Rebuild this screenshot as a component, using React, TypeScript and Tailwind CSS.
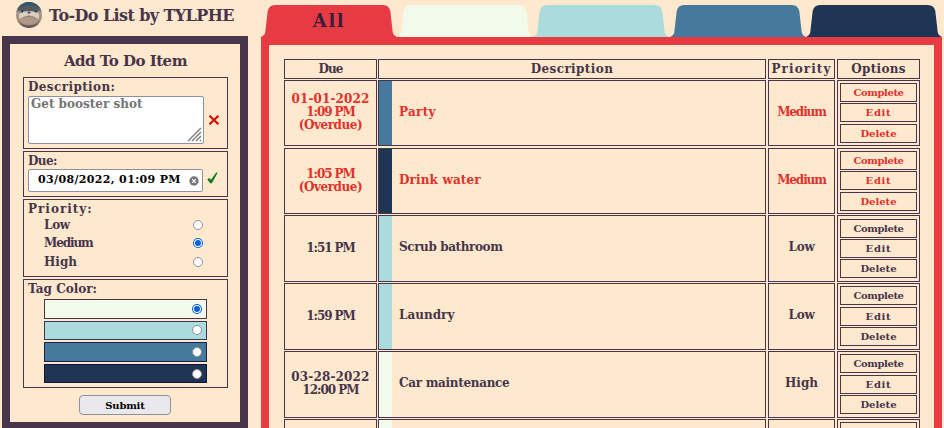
import type { ReactNode } from 'react';

const tabs = ['fill-[#e73b44]', 'fill-[#f2faeb]', 'fill-[#abdbdc]', 'fill-[#467a9c]', 'fill-[#1e3553]'];

type Line = { text: string; tracking: string };
type Item = {
  due: Line[];
  title: Line;
  priority: Line;
  tag: string;
  overdue?: boolean;
  size: string;
  gaps: [string, string, string];
};

const medium = { text: 'Medium', tracking: 'tracking-[-1.1px]' };
const low = { text: 'Low', tracking: 'tracking-[-0.3px]' };
const high = { text: 'High', tracking: 'tracking-[0px]' };

const items: Item[] = [
  {
    due: [
      { text: '01-01-2022', tracking: 'tracking-[0.1px]' },
      { text: '1:09 PM', tracking: 'tracking-[-1.1px]' },
      { text: '(Overdue)', tracking: 'tracking-[-0.45px]' },
    ],
    title: { text: 'Party', tracking: 'tracking-[0.3px]' },
    priority: medium,
    tag: 'bg-[#467a9c]',
    overdue: true,
    size: 'h-[66px] mb-[2px]',
    gaps: ['mt-0', 'mt-[1px]', 'mt-[2px]'],
  },
  {
    due: [
      { text: '1:05 PM', tracking: 'tracking-[-1.1px]' },
      { text: '(Overdue)', tracking: 'tracking-[-0.45px]' },
    ],
    title: { text: 'Drink water', tracking: 'tracking-[0.15px]' },
    priority: medium,
    tag: 'bg-[#1e3553]',
    overdue: true,
    size: 'h-[66px] mb-[1px]',
    gaps: ['mt-0', 'mt-[1px]', 'mt-[2px]'],
  },
  {
    due: [{ text: '1:51 PM', tracking: 'tracking-[-1.1px]' }],
    title: { text: 'Scrub bathroom', tracking: 'tracking-[-0.4px]' },
    priority: low,
    tag: 'bg-[#abdbdc]',
    size: 'h-[67px] mb-[1px]',
    gaps: ['mt-[1px]', 'mt-[1px]', 'mt-[1px]'],
  },
  {
    due: [{ text: '1:59 PM', tracking: 'tracking-[-1.1px]' }],
    title: { text: 'Laundry', tracking: 'tracking-[0px]' },
    priority: low,
    tag: 'bg-[#abdbdc]',
    size: 'h-[67px] mb-[1px]',
    gaps: ['mt-0', 'mt-[2px]', 'mt-[1px]'],
  },
  {
    due: [
      { text: '03-28-2022', tracking: 'tracking-[0.15px]' },
      { text: '12:00 PM', tracking: 'tracking-[-1px]' },
    ],
    title: { text: 'Car maintenance', tracking: 'tracking-[-0.3px]' },
    priority: high,
    tag: 'bg-[#f2faeb]',
    size: 'h-[67px] mb-[1px]',
    gaps: ['mt-0', 'mt-[2px]', 'mt-[1px]'],
  },
  {
    due: [],
    title: { text: '', tracking: '' },
    priority: { text: '', tracking: '' },
    tag: 'bg-[#f2faeb]',
    size: 'h-[67px]',
    gaps: ['mt-0', 'mt-[2px]', 'mt-[1px]'],
  },
];

const columns = 'grid grid-cols-[93px_388px_67px_83px]';

function Radio({ checked = false }: { checked?: boolean }) {
  return checked ? (
    <span className="flex size-[10px] shrink-0 items-center justify-center rounded-full bg-white ring-1 ring-[#0060df] ring-inset">
      <span className="size-[6px] rounded-full bg-[#0060df]" />
    </span>
  ) : (
    <span className="size-[10px] shrink-0 rounded-full border border-[#8f8f9d] bg-white" />
  );
}

function Group({ className, children }: { className: string; children: ReactNode }) {
  return <section className={`w-[205px] border border-[#47354b] pl-[4px] ${className}`}>{children}</section>;
}

function Avatar() {
  return (
    <svg className="size-[26px]" viewBox="0 0 26 26">
      <defs>
        <clipPath id="face">
          <circle cx="13" cy="13" r="13" />
        </clipPath>
        <linearGradient id="fur" x1="0" y1="0" x2="0" y2="1">
          <stop offset="0" stopColor="#3b4a59" />
          <stop offset=".3" stopColor="#62666c" />
          <stop offset=".42" stopColor="#a89c90" />
          <stop offset=".7" stopColor="#a28a7b" />
          <stop offset="1" stopColor="#574a55" />
        </linearGradient>
      </defs>
      <g clipPath="url(#face)">
        <rect width="26" height="26" fill="url(#fur)" />
        <path d="M0 0h26v8C20 2 6 2 0 9z" fill="#31586c" />
        <path d="M3 8C7 2 18 2 23 8l-4 2H8z" fill="#565b62" />
        <path d="M3 12q4-3 10-3t10 3v5q-5-1-7-2l-3-1-3 1q-2 1-7 2z" fill="#d8cdc1" />
        <path d="M3 17q5-1 7-2l3-1 3 1q2 1 7 2-2 6-10 6T3 17z" fill="#b09786" />
        <ellipse cx="13" cy="10.6" rx="1.7" ry="1" fill="#4c464b" />
        <circle cx="6.2" cy="9.4" r="1" fill="#272933" />
        <circle cx="19.8" cy="9.4" r="1" fill="#272933" />
        <path d="M6.5 16q2-1.4 4-1.2l2.5-1 2.5 1q2-.2 4 1.2" fill="none" stroke="#74665f" strokeWidth=".8" />
      </g>
    </svg>
  );
}

function Sidebar() {
  return (
    <aside className="ml-[2px] w-[246px] shrink-0">
      <header className="flex h-9 pt-[2px] pl-[14px]">
        <Avatar />
        <h1 className="ml-[7px] pt-[2px] text-[16px] leading-[24px] tracking-[-0.6px] whitespace-nowrap">To-Do List by TYLPHE</h1>
      </header>
      <form className="flex h-[394px] flex-col border-8 border-[#47354b] pl-[13px]">
        <h2 className="h-[33px] w-[205px] pt-[7px] text-center text-[15px] leading-5 tracking-[-0.5px]">Add To Do Item</h2>
        <Group className="h-[72px]">
          <div className="h-[18px] pt-[1px] leading-4 tracking-[0.4px]">Description:</div>
          <div className="flex items-center">
            <div className="flex h-[48px] w-[176px] justify-between rounded-[2px] border border-[#8f8f9d] bg-white pl-[2px]">
              <span className="leading-[14px] whitespace-nowrap text-[#757575]">Get booster shot</span>
              <svg className="mr-[1px] mb-[1px] size-[15px] shrink-0 self-end" viewBox="0 0 15 15" fill="none" stroke="#777" strokeWidth="1.3">
                <path d="M1 14 14 1M5 14l9-9M9 14l5-5M13 14l1-1" />
              </svg>
            </div>
            <svg className="ml-[4px] h-[10px] w-[12px]" viewBox="0 0 12 10" stroke="#dc0808" strokeWidth="2.2">
              <path d="m1.5.8 9 8.4M10.5.8l-9 8.4" />
            </svg>
          </div>
        </Group>
        <Group className="mt-[2px] h-[46px]">
          <div className="h-[17px] pt-[1px] leading-4 tracking-[-0.6px]">Due:</div>
          <div className="flex">
            <div className="flex h-[23px] w-[175px] items-center rounded-[2px] border border-[#8f8f9d] bg-white pl-[9px] text-[11px] text-black">
              <span className="w-[151px] pb-[2px] tracking-[0.35px] whitespace-nowrap">03/08/2022, 01:09 PM</span>
              <svg className="size-[10px] shrink-0" viewBox="0 0 10 10">
                <circle cx="5" cy="5" r="4.7" fill="#777" />
                <path d="m3.2 3.2 3.6 3.6M6.8 3.2 3.2 6.8" stroke="#fff" strokeWidth="1.2" />
              </svg>
            </div>
            <svg className="mt-[3px] ml-[4px] h-[12px] w-[11px]" viewBox="0 0 11 12">
              <path d="M.3 7.5 2 6l2 1.8L9.2.4l1.5.3L4.8 11.2H3.2z" fill="#087b16" />
            </svg>
          </div>
        </Group>
        <Group className="mt-[2px] h-[78px]">
          <div className="h-[16px] pt-[1px] leading-4 tracking-[1px]">Priority:</div>
          <div className="flex w-[175px] flex-col pl-[16px]">
            <div className="flex h-[18px] items-center justify-between tracking-[-0.3px]">
              <span>Low</span>
              <Radio />
            </div>
            <div className="flex h-[18px] items-center justify-between tracking-[-1.1px]">
              <span>Medium</span>
              <Radio checked />
            </div>
            <div className="flex h-[19px] items-center justify-between">
              <span className="pt-[1px]">High</span>
              <Radio />
            </div>
          </div>
        </Group>
        <Group className="mt-[2px] h-[109px]">
          <div className="h-[19px] pt-[1px] leading-4">Tag Color:</div>
          <div className="flex w-[179px] flex-col gap-[2px] pl-[16px]">
            <div className="flex h-[20px] items-center justify-end border border-[#47354b] bg-[#f2faeb] pr-[4px]">
              <Radio checked />
            </div>
            <div className="flex h-[19px] items-center justify-end border border-[#3b3358] bg-[#abdbdc] pr-[4px] pb-[1px]">
              <Radio />
            </div>
            <div className="flex h-[20px] items-center justify-end border border-[#1c1c48] bg-[#467a9c] pr-[4px]">
              <Radio />
            </div>
            <div className="flex h-[19px] items-center justify-end border border-[#13123b] bg-[#1e3553] pr-[4px]">
              <Radio />
            </div>
          </div>
        </Group>
        <button
          type="button"
          className="mt-[7px] ml-[56px] h-[20px] w-[92px] shrink-0 rounded-[4px] border border-[#8f8f9d] bg-[#e9e9ed] pt-[1px] text-[10px] leading-[17px] font-bold tracking-[-0.2px] text-black"
        >
          Submit
        </button>
      </form>
    </aside>
  );
}

function Option({ label, className, blank }: { label: string; className: string; blank?: boolean }) {
  return (
    <button type="button" className={`h-[19px] shrink-0 border border-[#47354b] text-[10px] leading-[16px] font-bold ${className}`}>
      {blank ? '' : label}
    </button>
  );
}

function Row({ item }: { item: Item }) {
  const blank = item.title.text === '';
  return (
    <div className={`${columns} shrink-0 ${item.size} ${item.overdue ? 'text-[#e2302b]' : ''}`}>
      <div className="flex flex-col items-center justify-center border border-[#47354b] pb-[1px] leading-[13px]">
        {item.due.map((line) => (
          <span key={line.text} className={`whitespace-nowrap ${line.tracking}`}>
            {line.text}
          </span>
        ))}
      </div>
      <div className="-mr-[1px] ml-[1px] flex items-center border border-[#47354b]">
        <span className={`mr-[7px] h-full w-[13px] ${item.tag}`} />
        <span className={`pb-[2px] ${item.title.tracking}`}>{item.title.text}</span>
      </div>
      <div className="-mr-[3px] ml-[3px] flex items-center justify-center border border-[#47354b] pb-[2px]">
        <span className={item.priority.tracking}>{item.priority.text}</span>
      </div>
      <div className="-mr-[5px] ml-[5px] flex flex-col border border-[#47354b] px-[2px] pt-[2px]">
        <Option label="Complete" blank={blank} className={`tracking-[-0.4px] ${item.gaps[0]}`} />
        <Option label="Edit" blank={blank} className={`tracking-[0.7px] ${item.gaps[1]}`} />
        <Option label="Delete" blank={blank} className={`tracking-[0px] ${item.gaps[2]}`} />
      </div>
    </div>
  );
}

function Board() {
  return (
    <main className="ml-[13px] w-[681px] shrink-0">
      <nav className="flex h-[37px] pt-[5px]">
        {tabs.map((fill, i) => (
          <div key={fill} className="grid h-[32px] w-[136.2px] shrink-0">
            <svg className="col-start-1 row-start-1 h-[32px] w-[136px]" viewBox="0 0 136 32">
              <path className={fill} d="M0 32Q4 30 4.3 27L6.7 6Q8 0 14 0H122Q128 0 129.3 6L131.7 27Q132 30 136 32Z" />
            </svg>
            {i === 0 && (
              <span className="col-start-1 row-start-1 text-center text-[18px] leading-[31px] tracking-[1.6px] text-[#3a1d3b]">All</span>
            )}
          </div>
        ))}
      </nav>
      <div className="flex h-[400px] flex-col border-8 border-[#e73b44] pt-[14px] pl-[15px]">
        <div className={`${columns} mb-[2px] h-[19px] shrink-0 text-center leading-[18px]`}>
          <div className="border border-[#47354b] tracking-[-0.9px]">Due</div>
          <div className="-mr-[1px] ml-[1px] border border-[#47354b] tracking-[0.4px]">Description</div>
          <div className="-mr-[3px] ml-[3px] border border-[#47354b] tracking-[1.1px]">Priority</div>
          <div className="-mr-[5px] ml-[5px] border border-[#47354b] tracking-[0.3px]">Options</div>
        </div>
        {items.map((item, i) => (
          <Row key={i} item={item} />
        ))}
      </div>
    </main>
  );
}

export default function App() {
  return (
    <div className="flex h-[428px] w-[944px] overflow-hidden bg-[#ffe9ce] font-['DejaVu_Serif',serif] text-[12px] leading-[17px] font-bold text-[#47354b]">
      <Sidebar />
      <Board />
    </div>
  );
}
